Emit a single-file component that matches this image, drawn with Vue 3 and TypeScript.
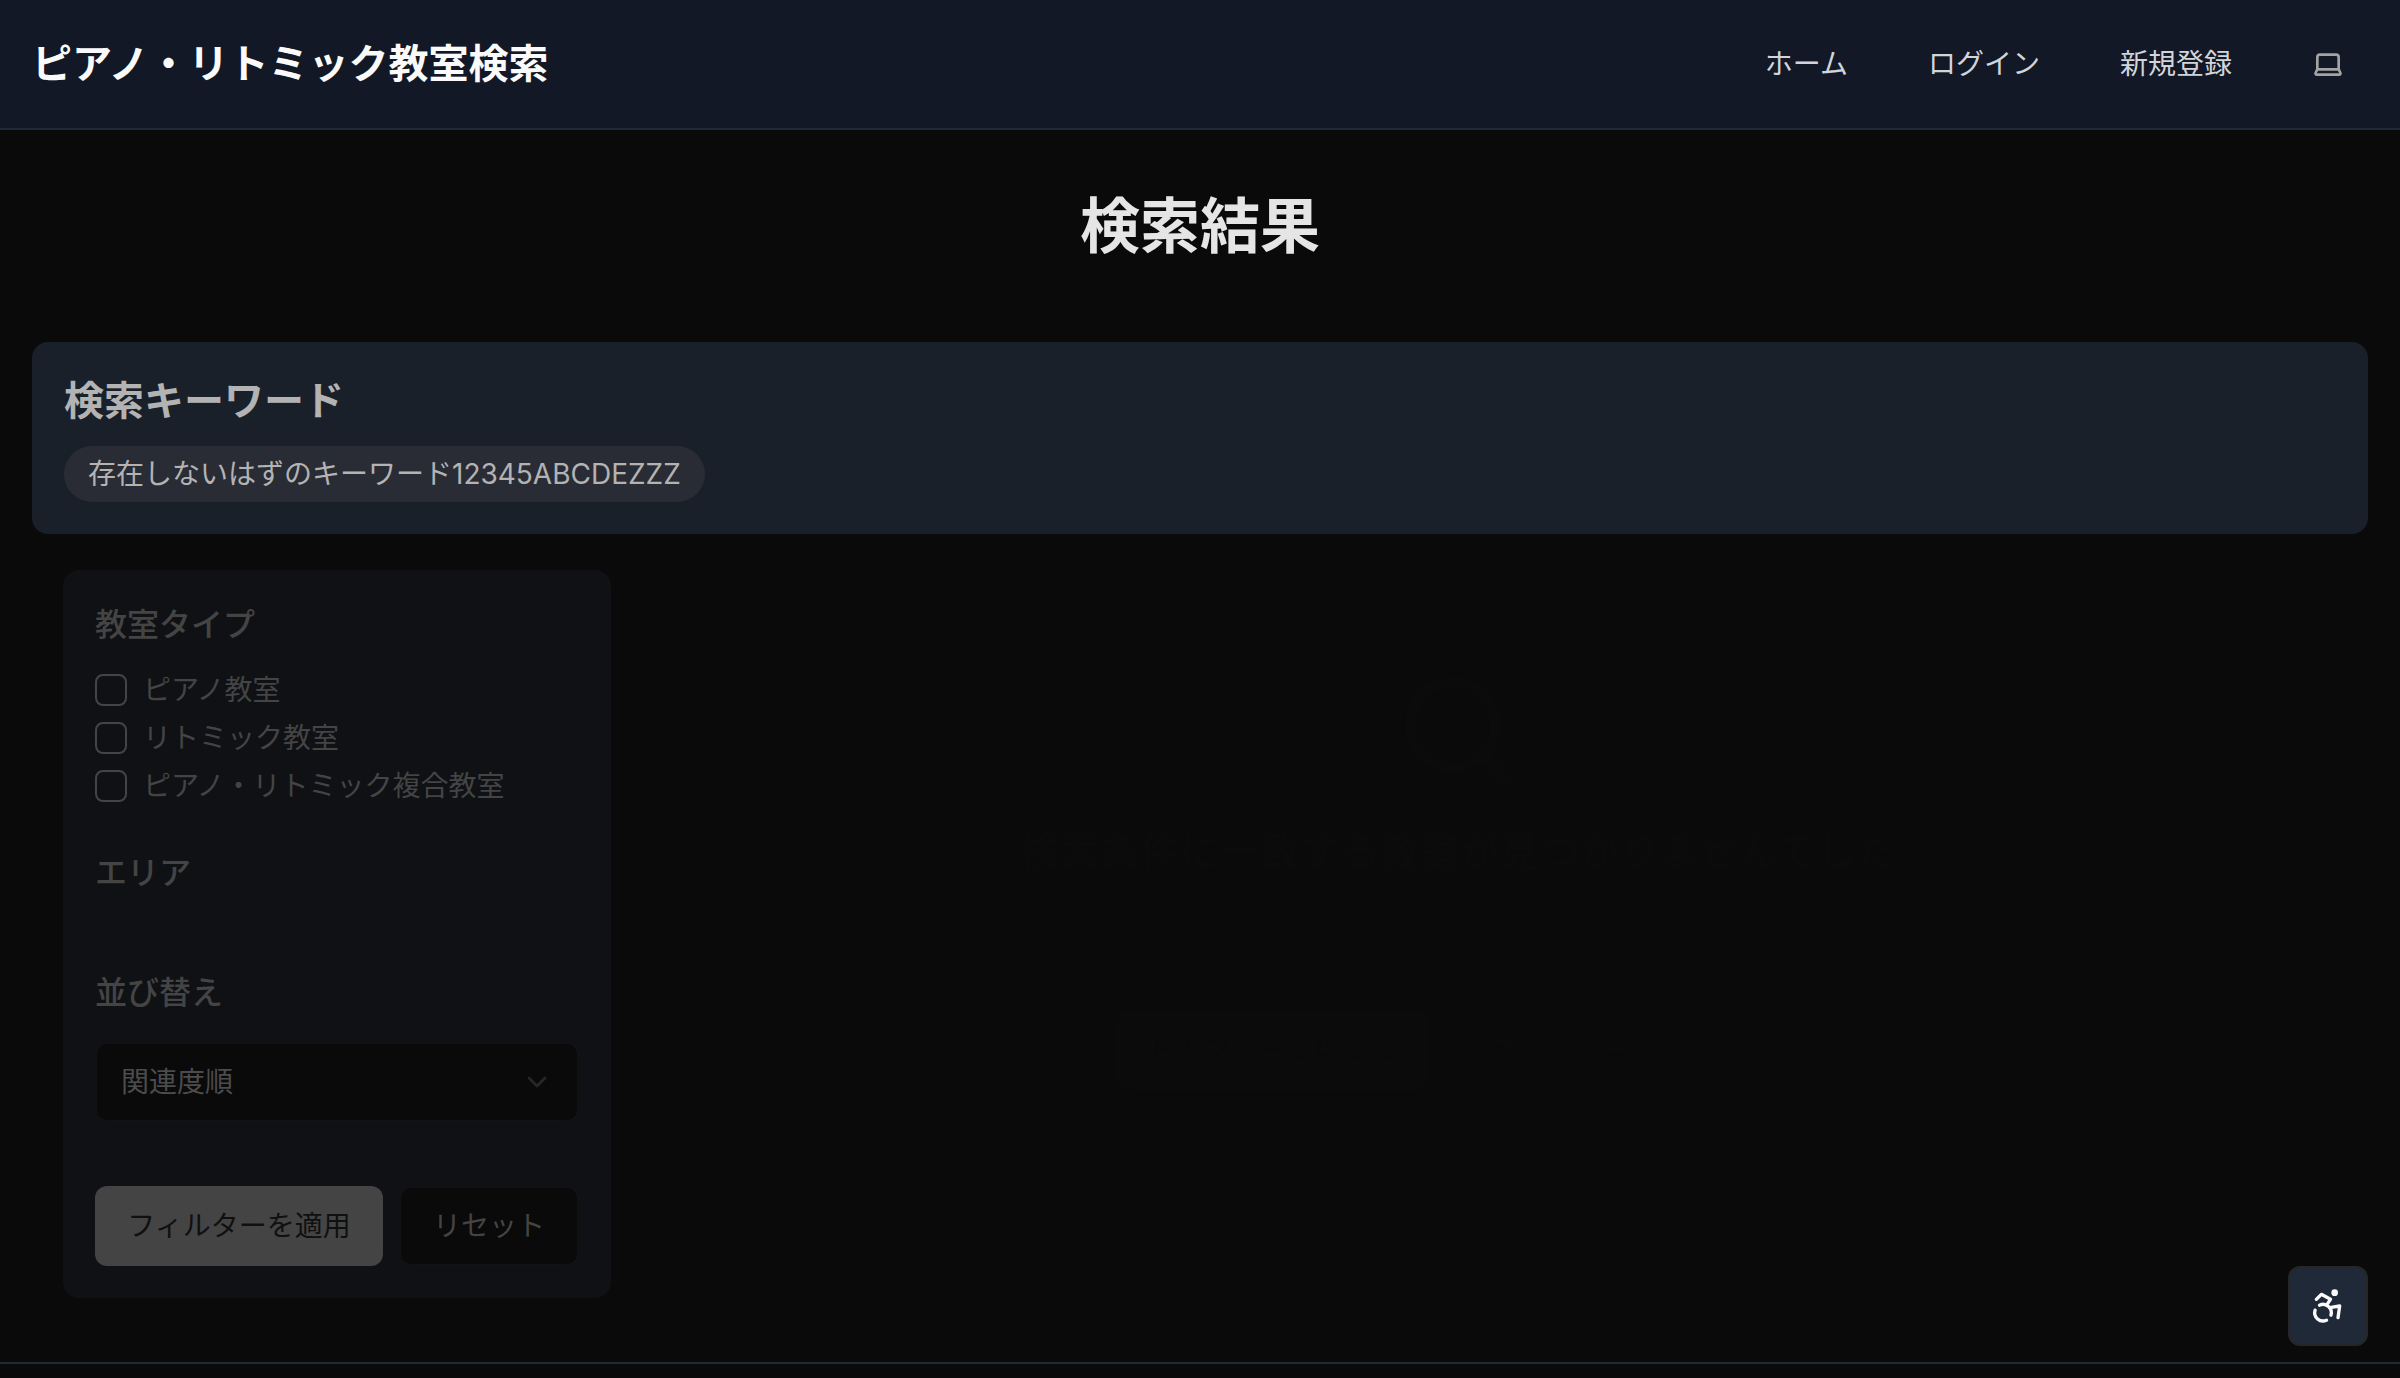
<script setup lang="ts">
import { ref } from 'vue'

interface NavLink {
  label: string
  href: string
}

const navLinks: NavLink[] = [
  { label: 'ホーム', href: '#home' },
  { label: 'ログイン', href: '#login' },
  { label: '新規登録', href: '#register' },
]

const roomTypes: string[] = ['ピアノ教室', 'リトミック教室', 'ピアノ・リトミック複合教室']
const selectedTypes = ref<string[]>([])
const sortOrder = ref<string>('relevance')
const keyword = ref<string>('存在しないはずのキーワード12345ABCDEZZZ')

function resetFilters(): void {
  selectedTypes.value = []
  sortOrder.value = 'relevance'
}
</script>

<template>
  <div class="page">
    <header class="site-header">
      <a class="brand" href="#home">ピアノ・リトミック教室検索</a>
      <nav class="nav">
        <a v-for="link in navLinks" :key="link.href" class="nav-link" :href="link.href">{{ link.label }}</a>
        <button class="theme-button" type="button" aria-label="テーマ切り替え">
          <svg class="icon-small" viewBox="0 0 24 24" aria-hidden="true">
            <path d="M20 16V7a2 2 0 0 0-2-2H6a2 2 0 0 0-2 2v9m16 0H4m16 0 1.28 2.55a1 1 0 0 1-.9 1.45H3.62a1 1 0 0 1-.9-1.45L4 16" />
          </svg>
        </button>
      </nav>
    </header>

    <main class="main">
      <h1 class="page-title">検索結果</h1>

      <section class="keyword-card">
        <h2 class="keyword-title">検索キーワード</h2>
        <span class="badge">{{ keyword }}</span>
      </section>

      <div class="columns">
        <form class="filters" @submit.prevent>
          <fieldset class="group types">
            <legend class="group-title">教室タイプ</legend>
            <label v-for="room in roomTypes" :key="room" class="check-row">
              <input v-model="selectedTypes" class="check" type="checkbox" :value="room" />
              <span>{{ room }}</span>
            </label>
          </fieldset>

          <div class="group">
            <h3 class="group-title">エリア</h3>
          </div>

          <div class="group">
            <label class="group-title" for="sort">並び替え</label>
            <div class="select-wrap">
              <select id="sort" v-model="sortOrder" class="select">
                <option value="relevance">関連度順</option>
              </select>
              <svg class="icon-small chevron" viewBox="0 0 24 24" aria-hidden="true">
                <path d="m6 9 6 6 6-6" />
              </svg>
            </div>
          </div>

          <div class="actions">
            <button class="button primary" type="submit">フィルターを適用</button>
            <button class="button outline" type="button" @click="resetFilters">リセット</button>
          </div>
        </form>

        <section class="empty">
          <svg class="empty-icon" viewBox="0 0 24 24" aria-hidden="true">
            <circle cx="11" cy="11" r="8" />
            <path d="m21 21-4.3-4.3" />
          </svg>
          <h2 class="empty-title">検索条件に一致する教室が見つかりませんでした</h2>
          <div class="empty-actions">
            <button class="button faint-primary" type="button">トップページに戻る</button>
            <button class="button faint-outline" type="button" @click="resetFilters">フィルターをリセット</button>
          </div>
        </section>
      </div>
    </main>

    <footer class="site-footer"></footer>

    <button class="a11y-button" type="button" aria-label="アクセシビリティ設定">
      <svg class="a11y-icon" viewBox="0 0 24 24" aria-hidden="true">
        <circle cx="16" cy="4" r="1" />
        <path d="m18 19 1-7-6 1" />
        <path d="m5 8 3-3 5.5 3-2.36 3.5" />
        <path d="M4.24 14.5a5 5 0 0 0 6.88 6" />
        <path d="M13.76 17.5a5 5 0 0 0-6.88-6" />
      </svg>
    </button>
  </div>
</template>

<style>
body {
  margin: 0;
  background: #0a0a0a;
}
</style>

<style scoped>
.page,
.page * {
  box-sizing: border-box;
}

.page {
  display: flex;
  flex-direction: column;
  min-height: 100vh;
  background: #0a0a0a;
  color: #fafafa;
  font-family: Inter, "Noto Sans CJK JP", sans-serif;
  font-size: 28px;
  line-height: 40px;
}

h1,
h2,
h3 {
  margin: 0;
}

button,
select {
  font: inherit;
}

svg {
  display: block;
  fill: none;
  stroke: currentColor;
  stroke-width: 2;
  stroke-linecap: round;
  stroke-linejoin: round;
}

.site-header {
  display: flex;
  align-items: center;
  justify-content: space-between;
  height: 130px;
  padding: 0 32px;
  background: #121826;
  border-bottom: 2px solid #1f2937;
}

.brand {
  color: #fafafa;
  font-size: 40px;
  font-weight: 700;
  line-height: 56px;
  text-decoration: none;
}

.nav {
  display: flex;
  align-items: center;
  gap: 32px;
}

.nav-link {
  padding: 0 24px;
  color: #d1d5db;
  text-decoration: none;
}

.theme-button {
  display: flex;
  align-items: center;
  justify-content: center;
  width: 80px;
  height: 80px;
  padding: 0;
  border: 0;
  background: none;
  color: #a3a3a3;
}

.icon-small {
  width: 32px;
  height: 32px;
}

.main {
  flex: 1;
  padding: 60px 32px 64px;
}

.page-title {
  color: #e5e5e5;
  font-size: 60px;
  font-weight: 700;
  line-height: 72px;
  text-align: center;
}

.keyword-card {
  margin-top: 80px;
  padding: 32px;
  border-radius: 16px;
  background: #1a2029;
  color: #b3b3b3;
}

.keyword-title {
  margin-bottom: 18px;
  font-size: 40px;
  font-weight: 700;
  line-height: 54px;
}

.badge {
  display: block;
  width: fit-content;
  padding: 8px 24px;
  border-radius: 28px;
  background: #292c35;
}

.columns {
  display: flex;
  align-items: flex-start;
  margin-top: 36px;
  padding: 0 31px;
}

.filters {
  flex: none;
  width: 548px;
  padding: 32px;
  border-radius: 16px;
  background: #101114;
  color: #444444;
}

.group {
  margin: 0 0 48px;
  padding: 0;
  border: 0;
}

.types {
  margin-bottom: 32px;
}

.group-title {
  display: block;
  margin: 0;
  padding: 0 0 26px;
  font-size: 32px;
  font-weight: 500;
  line-height: 46px;
}

.check-row {
  display: flex;
  align-items: center;
  gap: 16px;
  height: 32px;
  margin-bottom: 16px;
}

.check {
  appearance: none;
  width: 32px;
  height: 32px;
  margin: 0;
  border: 2px solid #444444;
  border-radius: 8px;
}

.select-wrap {
  position: relative;
}

.select {
  display: block;
  width: 100%;
  height: 80px;
  padding: 0 24px;
  appearance: none;
  border: 2px solid #111214;
  border-radius: 12px;
  background: #0a0a0a;
  color: #4c4c4c;
}

.chevron {
  position: absolute;
  top: 24px;
  right: 26px;
  color: #272727;
  pointer-events: none;
}

.actions {
  display: flex;
  gap: 16px;
  margin-top: 64px;
}

.button {
  height: 80px;
  padding: 0 28px;
  border: 2px solid transparent;
  border-radius: 12px;
  white-space: nowrap;
}

.primary {
  flex: 1;
  border: 0;
  background: #444444;
  color: #101010;
}

.outline {
  width: 180px;
  border-color: #111214;
  background: #0a0a0a;
  color: #444444;
}

.empty {
  display: flex;
  flex: 1;
  flex-direction: column;
  align-items: center;
  padding: 96px 32px 0 0;
  color: #0b0b0b;
}

.empty-icon {
  width: 128px;
  height: 128px;
}

.empty-title {
  margin-top: 30px;
  font-size: 40px;
  font-weight: 700;
  line-height: 56px;
}

.empty-actions {
  display: flex;
  gap: 32px;
  margin-top: 130px;
}

.faint-primary {
  background: #0b0b0b;
  color: #0a0a0a;
}

.faint-outline {
  background: #0a0a0a;
  color: #0b0b0b;
}

.site-footer {
  height: 16px;
  border-top: 2px solid #1f2937;
  background: #0a0a0a;
}

.a11y-button {
  position: fixed;
  right: 32px;
  bottom: 32px;
  display: flex;
  align-items: center;
  justify-content: center;
  width: 80px;
  height: 80px;
  padding: 0;
  border: 2px solid #262626;
  border-radius: 12px;
  background: #1f2937;
  color: #fafafa;
}

.a11y-icon {
  width: 40px;
  height: 40px;
}
</style>
